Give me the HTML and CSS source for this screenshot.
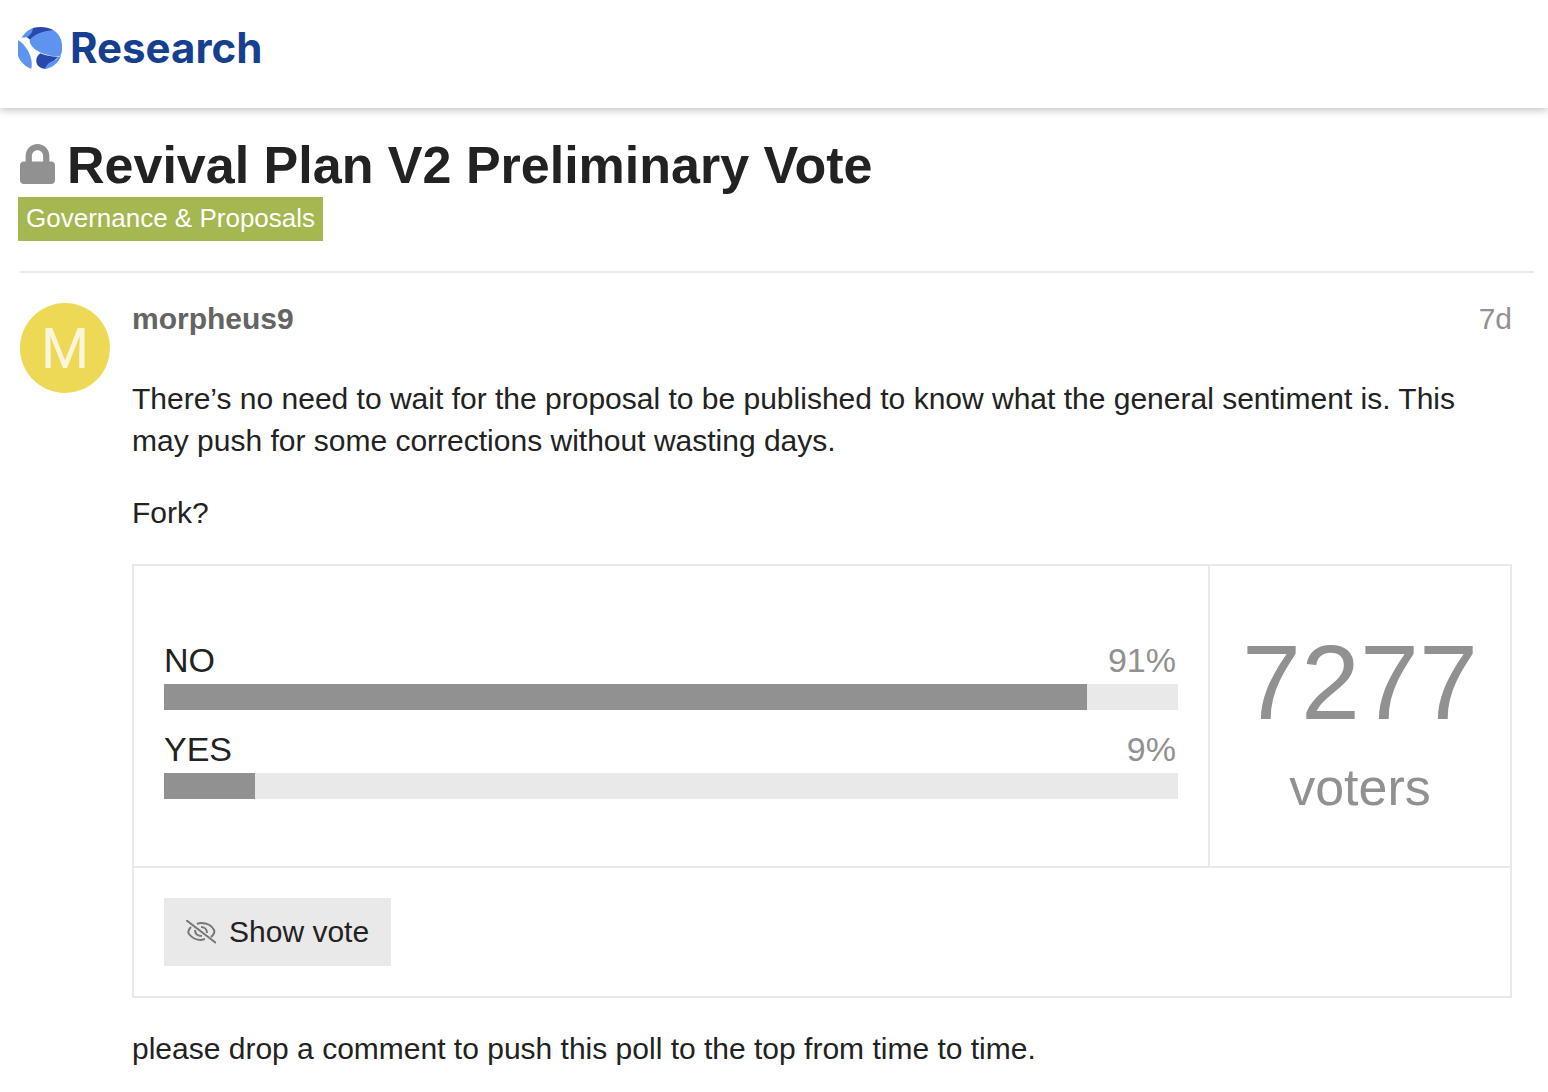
FILE: index.html
```html
<!DOCTYPE html>
<html lang="en">
<head>
    <meta charset="UTF-8">
    <meta name="viewport" content="width=device-width, initial-scale=1">
    <title>Revival Plan V2 Preliminary Vote</title>
    <link rel="stylesheet" href="styles.css">
</head>
<body>
    <header class="site-header">
        <a class="logo" href="#">
            <svg class="logo-mark" viewBox="54 48 132 129" aria-hidden="true">
                <path fill="#5f93f0" d="M65 84C72 70 85 58 101 54L106 58L92 78C84 82 74 82 65 84Z"/>
                <path fill="#2a48ac" d="M99 54C118 49 142 50 160 60L158 66C130 66 108 76 91 90L80 81C90 77 98 67 99 54Z"/>
                <path fill="#5f93f0" d="M89 92C97 76 128 62 160 61C178 72 187 90 186 112C187 123 184 132 181 138C150 142 92 124 89 92Z"/>
                <path fill="#5f93f0" d="M54 91C72 99 102 139 94 176C76 171 62 157 54 138Z"/>
                <path fill="#2a48ac" d="M121 130C134 136 152 141 175 140L136 177C118 174 107 164 109 149C110 141 115 134 121 130Z"/>
                <path fill="#5f93f0" d="M183 138C176 158 158 174 134 177C140 166 145 158 158 153C167 150 172 147 174 141Z"/>
            </svg>
            <span class="logo-text">Research</span>
        </a>
    </header>

    <main class="topic">
        <div class="topic-header">
            <h1 class="topic-title">
                <svg class="lock-icon" viewBox="0 0 448 512" role="img" aria-label="Closed topic">
                    <path fill="currentColor" d="M400 224h-24v-72C376 68.200 307.800 0 224 0S72 68.200 72 152v72H48c-26.500 0-48 21.500-48 48v192c0 26.500 21.500 48 48 48h352c26.500 0 48-21.500 48-48V272c0-26.500-21.500-48-48-48zm-104 0H152v-72c0-39.700 32.300-72 72-72s72 32.300 72 72v72z"/>
                </svg>
                <span>Revival Plan V2 Preliminary Vote</span>
            </h1>
            <a class="category" href="#">Governance &amp; Proposals</a>
        </div>

        <article class="post">
            <div class="avatar" aria-hidden="true">M</div>
            <div class="post-content">
                <div class="post-meta">
                    <a class="username" href="#">morpheus9</a>
                    <a class="post-date" href="#">7d</a>
                </div>
                <p>There’s no need to wait for the proposal to be published to know what the general sentiment is. This may push for some corrections without wasting days.</p>
                <p>Fork?</p>

                <div class="poll">
                    <div class="poll-body">
                        <ul class="results">
                            <li>
                                <div class="option"><span>NO</span><span class="percentage">91%</span></div>
                                <div class="bar-back"><div class="bar" style="width: 91%"></div></div>
                            </li>
                            <li>
                                <div class="option"><span>YES</span><span class="percentage">9%</span></div>
                                <div class="bar-back"><div class="bar" style="width: 9%"></div></div>
                            </li>
                        </ul>
                        <div class="poll-info">
                            <span class="info-number">7277</span>
                            <span class="info-label">voters</span>
                        </div>
                    </div>
                    <div class="poll-buttons">
                        <button class="btn" type="button">
                            <svg class="eye-icon" viewBox="0 0 30 24" fill="none" stroke="currentColor" stroke-width="2" aria-hidden="true">
                                <path d="M11 4Q13 3 15 3C21 3 26 6 28 10Q29 12 27 15L25 17"/>
                                <path d="M5 7Q1 11 3 14C6 18 10 20 15 20L19 19"/>
                                <path d="M15 7C18 7 21 9 21 13"/>
                                <path d="M9 10C9 14 12 16 16 16"/>
                                <path d="M0 0L30 23"/>
                            </svg>
                            <span>Show vote</span>
                        </button>
                    </div>
                </div>

                <p>please drop a comment to push this poll to the top from time to time.</p>
            </div>
        </article>
    </main>
</body>
</html>
```

FILE: styles.css
```css
* {
    box-sizing: border-box;
}
body {
    margin: 0;
    background: #fff;
    color: #222;
    font-family: "Liberation Sans", Arial, sans-serif;
    font-size: 30px;
    line-height: 42px;
}
a {
    color: inherit;
    text-decoration: none;
}
.site-header {
    display: flex;
    height: 108px;
    padding: 26px 18px;
    box-shadow: 0 2px 8px rgba(0, 0, 0, 0.25);
}
.logo {
    display: flex;
    gap: 8px;
    height: 44px;
}
.logo-mark {
    width: 44px;
    height: 43px;
}
.logo-text {
    color: #173f8f;
    font-family: Inter, sans-serif;
    font-size: 42px;
    font-weight: 700;
    line-height: 44px;
}
.topic {
    padding: 26px 14px 0 18px;
}
.topic-header {
    padding-bottom: 30px;
}
.topic-title {
    display: flex;
    align-items: center;
    gap: 12px;
    margin: 0;
    padding: 0 2px;
    font-size: 52px;
    line-height: 63px;
}
.lock-icon {
    width: 35px;
    height: 40px;
    margin-bottom: 4px;
    color: #919191;
}
.category {
    display: block;
    width: fit-content;
    padding: 0 8px 2px;
    background: #a5b750;
    color: #fff;
    font-size: 26px;
}
.post {
    display: flex;
    gap: 22px;
    margin-left: 2px;
    padding: 30px 22px 0 0;
    border-top: 2px solid #e9e9e9;
}
.avatar {
    flex: none;
    width: 90px;
    height: 90px;
    border-radius: 50%;
    background: #edd956;
    color: #fbf6da;
    font-family: Roboto, sans-serif;
    font-size: 55px;
    line-height: 92px;
    text-align: center;
}
.post-content {
    flex: 1;
    min-width: 0;
}
.post-meta {
    display: flex;
    justify-content: space-between;
    line-height: 32px;
}
.username {
    color: #646464;
    font-weight: bold;
}
.post-date {
    color: #919191;
}
.post-content p {
    margin: 30px 0;
}
.post-meta + p {
    margin-top: 43px;
}
.poll {
    border: 2px solid #e9e9e9;
}
.poll-body {
    display: flex;
    min-height: 300px;
}
.results {
    flex: 1;
    display: flex;
    flex-direction: column;
    justify-content: center;
    gap: 18px;
    margin: 0;
    padding: 36px 30px 30px;
    list-style: none;
}
.option {
    display: flex;
    justify-content: space-between;
    padding: 0 2px 3px 0;
    font-size: 34px;
}
.percentage {
    color: #919191;
}
.bar-back {
    background: #e9e9e9;
}
.bar {
    height: 26px;
    background: #919191;
}
.poll-info {
    display: flex;
    flex-direction: column;
    justify-content: center;
    align-items: center;
    width: 302px;
    padding-bottom: 4px;
    border-left: 2px solid #e9e9e9;
    color: #919191;
}
.info-number {
    font-size: 106px;
    line-height: 146px;
}
.info-label {
    font-size: 52px;
    line-height: 64px;
}
.poll-buttons {
    padding: 30px;
    border-top: 2px solid #e9e9e9;
}
.btn {
    display: flex;
    align-items: center;
    gap: 13px;
    height: 68px;
    padding: 0 22px;
    border: none;
    background: #e9e9e9;
    color: #222;
    font: inherit;
    cursor: pointer;
}
.eye-icon {
    width: 30px;
    height: 24px;
    color: #777;
}
```
